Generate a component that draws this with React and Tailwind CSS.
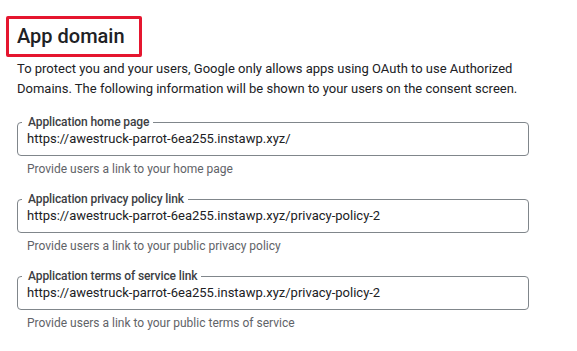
import React from "react";

function Field({ label, value, helper }) {
  return (
    <div className="flex flex-col">
      <fieldset className="h-[40px] rounded-[4px] border border-[#80868b] pl-[4px] pr-2 mx-0 -mt-[6px]">
        <legend className="ml-0 pl-[6px] pr-[4px] text-[12px] leading-[12px] font-medium tracking-[-0.1px] text-[#3c4043]">
          {label}
        </legend>
        <div className="pl-[5px] text-[13px] leading-[20px] text-[#202124] mt-[1px]">{value}</div>
      </fieldset>
      <div className="pl-[10px] pt-[5px] text-[12px] leading-[16px] text-[#5f6368]">{helper}</div>
    </div>
  );
}

export default function App() {
  return (
    <div
      className="w-[577px] h-[351px] bg-white overflow-hidden"
      style={{ fontFamily: "Roboto, 'Liberation Sans', sans-serif" }}
    >
      <div className="pl-[6px] pt-[16px]">
        <div className="inline-block border-[3px] border-[#e5162f] rounded-[2px] w-[136px] h-[41px] pl-[8px] pt-[5px]">
          <h2 className="text-[20px] leading-[24px] font-medium text-[#202124]">App domain</h2>
        </div>
      </div>
      <div className="pl-[17px] pr-[50px]">
        <p className="mt-[2px] text-[13px] leading-[20px] text-[#202124]">
          To protect you and your users, Google only allows apps using OAuth to use Authorized
          Domains. The following information will be shown to your users on the consent screen.
        </p>
        <div className="mt-[23px] w-[512px] flex flex-col gap-[22px]">
          <Field
            label="Application home page"
            value="https://awestruck-parrot-6ea255.instawp.xyz/"
            helper="Provide users a link to your home page"
          />
          <Field
            label="Application privacy policy link"
            value="https://awestruck-parrot-6ea255.instawp.xyz/privacy-policy-2"
            helper="Provide users a link to your public privacy policy"
          />
          <Field
            label="Application terms of service link"
            value="https://awestruck-parrot-6ea255.instawp.xyz/privacy-policy-2"
            helper="Provide users a link to your public terms of service"
          />
        </div>
      </div>
    </div>
  );
}
